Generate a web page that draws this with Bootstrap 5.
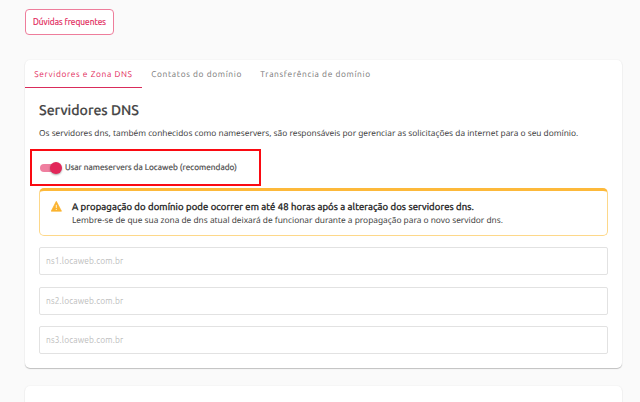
<!DOCTYPE html>
<html lang="pt-BR">
<head>
  <meta charset="UTF-8">
  <meta name="viewport" content="width=device-width, initial-scale=1">
  <title>Servidores DNS</title>
  <link href="https://cdn.jsdelivr.net/npm/bootstrap@5.3.0/dist/css/bootstrap.min.css" rel="stylesheet">
  <style>
    body {
      background: #fafafa;
      color: #444;
      font-family: Ubuntu, "Noto Sans", sans-serif;
      font-size: 8.2px;
      height: 402px;
      overflow: hidden;
      white-space: nowrap;
      text-rendering: geometricPrecision;
    }
    .page { height: 402px; overflow: hidden; padding: 9px 18px 0 25px; }
    .btn-faq {
      --bs-btn-color: #e22659;
      --bs-btn-border-color: #ee7d9b;
      --bs-btn-bg: #fff;
      --bs-btn-border-radius: 4px;
      width: 89px;
      height: 26px;
      padding: 0;
      font-size: 8.3px;
      line-height: 25px;
      -webkit-text-stroke: .2px currentColor;
      letter-spacing: .03px;
    }
    .panel {
      --bs-card-border-width: 0;
      --bs-card-border-radius: 5px;
      box-shadow: 0 1px 1px rgba(0, 0, 0, .22), 0 0 2px rgba(0, 0, 0, .07);
    }
    .panel-dns { height: 307.5px; margin-top: 25px; padding-top: .5px; }
    .panel-next { height: 60px; margin-top: 18.5px; }
    .panel .nav-link {
      color: #757575;
      height: 27.5px;
      padding: 0 9.2px;
      line-height: 27px;
      font-size: 8.4px;
      letter-spacing: .64px;
      transition: none;
    }
    .panel .nav-link.active {
      color: #e22659;
      width: 117px;
      box-shadow: inset 0 -1px #d92c5b;
    }
    .panel-content { padding: 0 14px; }
    .heading {
      font-size: 14.1px;
      font-weight: 500;
      line-height: 20px;
      margin: 12px 0 0;
      color: #444;
      -webkit-text-stroke: .2px currentColor;
    }
    .intro { font-family: "Noto Sans", "Open Sans", sans-serif; font-size: 8.32px; line-height: 12px; margin: 8px 0 0; }
    .toggle-row { height: 37px; margin-top: 9px; }
    .highlight { top: 0; left: -9px; width: 231px; height: 37px; border: 2px solid #fa0a12; }
    .toggle-track { width: 19px; height: 8px; margin-left: 1px; border-radius: 4px; background: #ef7f9f; }
    .toggle-thumb {
      width: 12px;
      height: 12px;
      top: -2px;
      right: -3px;
      background: #e22659;
      box-shadow: 0 1px 2px rgba(0, 0, 0, .35);
    }
    .toggle-text { margin-left: 6px; font-size: 8.24px; -webkit-text-stroke: .2px currentColor; letter-spacing: .06px; }
    .notice {
      height: 47.5px;
      margin: 2px 0 11.5px;
      padding: 9px 0 0 11px;
      border: 1px solid #fdd88a;
      border-top: 3px solid #fdb93a;
      border-radius: 5px;
      line-height: 13px;
    }
    .notice-body { margin-left: 9px; }
    .notice-title { font-size: 9.5px; line-height: 13.5px; color: #222; -webkit-text-stroke: .35px currentColor; letter-spacing: .115px; }
    .notice-text { font-family: "Noto Sans", "Open Sans", sans-serif; font-size: 8.33px; }
    .ns-field {
      height: 28px;
      min-height: 0;
      margin-bottom: 11.5px;
      padding: 0 6px;
      border: 1px solid #e2e2e2;
      border-radius: 2px;
      font-size: 8.4px;
      letter-spacing: .15px;
    }
    .ns-field::placeholder { color: #bdbdbd; }
  </style>
</head>
<body>
<div class="page">
  <button type="button" class="btn btn-faq d-block">Dúvidas frequentes</button>

  <div class="card panel panel-dns">
    <ul class="nav flex-nowrap">
      <li class="nav-item"><a class="nav-link active" href="#">Servidores e Zona DNS</a></li>
      <li class="nav-item"><a class="nav-link" href="#">Contatos do domínio</a></li>
      <li class="nav-item"><a class="nav-link" href="#">Transferência de domínio</a></li>
    </ul>

    <div class="panel-content">
      <h1 class="heading">Servidores DNS</h1>
      <p class="intro">Os servidores dns, também conhecidos como nameservers, são responsáveis por gerenciar as solicitações da internet para o seu domínio.</p>

      <div class="toggle-row position-relative d-flex align-items-center">
        <div class="toggle-track position-relative">
          <span class="toggle-thumb position-absolute rounded-circle"></span>
        </div>
        <span class="toggle-text">Usar nameservers da Locaweb (recomendado)</span>
        <div class="highlight position-absolute"></div>
      </div>

      <div class="notice d-flex">
        <svg width="12" height="12" viewBox="0 0 12 12">
          <path d="M4.9 1.3 10.1 11.2H-.2Z" transform="translate(.4)" fill="#fbb32f" stroke="#fbb32f" stroke-width=".7" stroke-linejoin="round"/>
          <path d="M5.3 4.8v3.2M5.3 8.9v1.1" stroke="#fff" stroke-width=".8"/>
        </svg>
        <div class="notice-body">
          <div class="notice-title">A propagação do domínio pode ocorrer em até 48 horas após a alteração dos servidores dns.</div>
          <div class="notice-text">Lembre-se de que sua zona de dns atual deixará de funcionar durante a propagação para o novo servidor dns.</div>
        </div>
      </div>

      <input type="text" class="form-control ns-field" placeholder="ns1.locaweb.com.br">
      <input type="text" class="form-control ns-field" placeholder="ns2.locaweb.com.br">
      <input type="text" class="form-control ns-field" placeholder="ns3.locaweb.com.br">
    </div>
  </div>

  <div class="card panel panel-next"></div>
</div>

<script src="https://cdn.jsdelivr.net/npm/bootstrap@5.3.0/dist/js/bootstrap.bundle.min.js"></script>
</body>
</html>
